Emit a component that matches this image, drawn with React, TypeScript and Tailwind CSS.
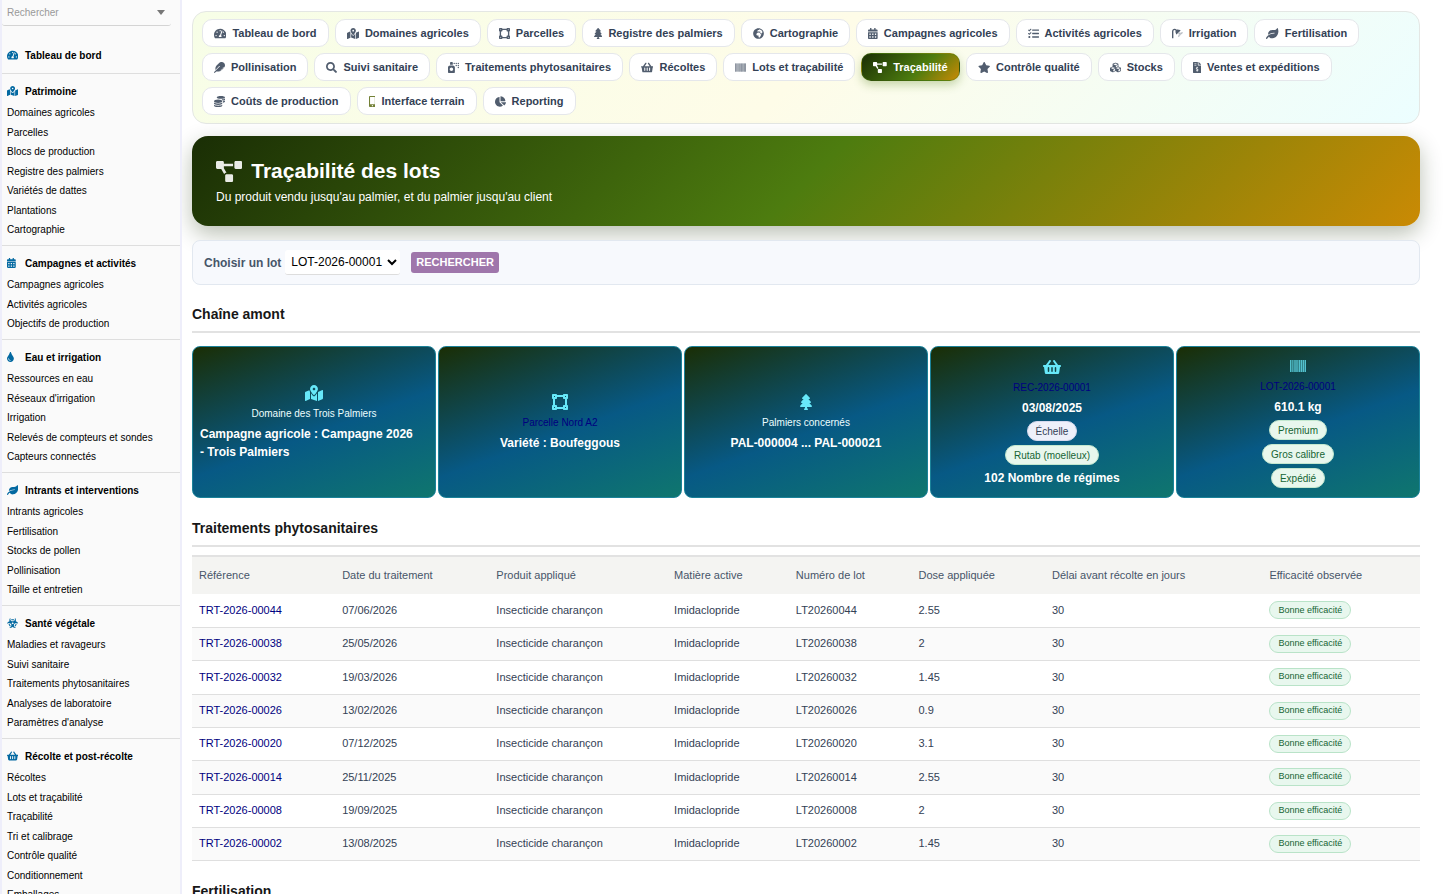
import type { ReactNode } from "react";
import type { IconType } from "react-icons";
import {
  FaBiohazard,
  FaCalendarAlt,
  FaChartPie,
  FaCoins,
  FaCubes,
  FaFeather,
  FaFileInvoiceDollar,
  FaGlobeAfrica,
  FaLeaf,
  FaMapMarkedAlt,
  FaMobileAlt,
  FaProjectDiagram,
  FaSearch,
  FaShoppingBasket,
  FaShower,
  FaSprayCan,
  FaStar,
  FaTachometerAlt,
  FaTasks,
  FaTint,
  FaTree,
  FaVectorSquare,
} from "react-icons/fa";

type Icon = IconType | ((props: { className?: string }) => ReactNode);

function BarcodeIcon({ className }: { className?: string }) {
  return (
    <svg viewBox="0 0 32 32" fill="currentColor" className={className} aria-hidden="true">
      <path d="M0 4h32v24H0z" opacity="0.4" />
      <path
        d="M0 4h2v24H0zM4 4h1v24H4zM8 4h1v24H8zM11 4h2v24h-2zM15 4h1v24h-1zM18 4h2v24h-2zM22 4h2v24h-2zM26 4h2v24h-2zM30 4h2v24h-2z"
        opacity="0.6"
      />
    </svg>
  );
}

// Width-to-height ratio of the glyphs that are not square.
const glyphAspect = new Map<Icon, string>([
  [FaTachometerAlt, "aspect-[9/8]"],
  [FaMapMarkedAlt, "aspect-[9/8]"],
  [FaLeaf, "aspect-[9/8]"],
  [FaShoppingBasket, "aspect-[9/8]"],
  [FaStar, "aspect-[9/8]"],
  [FaBiohazard, "aspect-[9/8]"],
  [FaProjectDiagram, "aspect-[5/4]"],
  [FaCalendarAlt, "aspect-[7/8]"],
  [FaTree, "aspect-[3/4]"],
  [FaFileInvoiceDollar, "aspect-[3/4]"],
  [FaTint, "aspect-[11/16]"],
  [FaMobileAlt, "aspect-[5/8]"],
]);

function Glyph({ of: Shape, className }: { of: Icon; className: string }) {
  return <Shape className={`w-auto shrink-0 ${glyphAspect.get(Shape) ?? "aspect-square"} ${className}`} />;
}

type MenuGroup = { title: string; icon: Icon; items: string[] };

const menu: MenuGroup[] = [
  {
    title: "Patrimoine",
    icon: FaMapMarkedAlt,
    items: [
      "Domaines agricoles",
      "Parcelles",
      "Blocs de production",
      "Registre des palmiers",
      "Variétés de dattes",
      "Plantations",
      "Cartographie",
    ],
  },
  {
    title: "Campagnes et activités",
    icon: FaCalendarAlt,
    items: ["Campagnes agricoles", "Activités agricoles", "Objectifs de production"],
  },
  {
    title: "Eau et irrigation",
    icon: FaTint,
    items: [
      "Ressources en eau",
      "Réseaux d'irrigation",
      "Irrigation",
      "Relevés de compteurs et sondes",
      "Capteurs connectés",
    ],
  },
  {
    title: "Intrants et interventions",
    icon: FaLeaf,
    items: ["Intrants agricoles", "Fertilisation", "Stocks de pollen", "Pollinisation", "Taille et entretien"],
  },
  {
    title: "Santé végétale",
    icon: FaBiohazard,
    items: [
      "Maladies et ravageurs",
      "Suivi sanitaire",
      "Traitements phytosanitaires",
      "Analyses de laboratoire",
      "Paramètres d'analyse",
    ],
  },
  {
    title: "Récolte et post-récolte",
    icon: FaShoppingBasket,
    items: [
      "Récoltes",
      "Lots et traçabilité",
      "Traçabilité",
      "Tri et calibrage",
      "Contrôle qualité",
      "Conditionnement",
      "Emballages",
    ],
  },
];

type NavEntry = { label: string; icon: Icon; active?: boolean; iconClass?: string };

const navEntries: NavEntry[] = [
  { label: "Tableau de bord", icon: FaTachometerAlt },
  { label: "Domaines agricoles", icon: FaMapMarkedAlt },
  { label: "Parcelles", icon: FaVectorSquare },
  { label: "Registre des palmiers", icon: FaTree },
  { label: "Cartographie", icon: FaGlobeAfrica },
  { label: "Campagnes agricoles", icon: FaCalendarAlt },
  { label: "Activités agricoles", icon: FaTasks },
  { label: "Irrigation", icon: FaShower },
  { label: "Fertilisation", icon: FaLeaf },
  { label: "Pollinisation", icon: FaFeather },
  { label: "Suivi sanitaire", icon: FaSearch },
  { label: "Traitements phytosanitaires", icon: FaSprayCan },
  { label: "Récoltes", icon: FaShoppingBasket },
  { label: "Lots et traçabilité", icon: BarcodeIcon },
  { label: "Traçabilité", icon: FaProjectDiagram, active: true },
  { label: "Contrôle qualité", icon: FaStar },
  { label: "Stocks", icon: FaCubes },
  { label: "Ventes et expéditions", icon: FaFileInvoiceDollar },
  { label: "Coûts de production", icon: FaCoins },
  { label: "Interface terrain", icon: FaMobileAlt, iconClass: "text-[#5b6b14]" },
  { label: "Reporting", icon: FaChartPie },
];

const columns = [
  "Référence",
  "Date du traitement",
  "Produit appliqué",
  "Matière active",
  "Numéro de lot",
  "Dose appliquée",
  "Délai avant récolte en jours",
  "Efficacité observée",
];

const treatments = [
  { id: "00044", date: "07/06/2026", dose: "2.55" },
  { id: "00038", date: "25/05/2026", dose: "2" },
  { id: "00032", date: "19/03/2026", dose: "1.45" },
  { id: "00026", date: "13/02/2026", dose: "0.9" },
  { id: "00020", date: "07/12/2025", dose: "3.1" },
  { id: "00014", date: "25/11/2025", dose: "2.55" },
  { id: "00008", date: "19/09/2025", dose: "2" },
  { id: "00002", date: "13/08/2025", dose: "1.45" },
];

function MenuTitle({ icon, children }: { icon: Icon; children: ReactNode }) {
  return (
    <h2 className="flex h-[18px] items-center pl-[5px] font-bold">
      <span className="flex w-[18px] items-center text-[#0369a1]">
        <Glyph of={icon} className="h-[10px]" />
      </span>
      {children}
    </h2>
  );
}

function Sidebar() {
  return (
    <aside className="w-[182px] shrink-0 overflow-hidden border-x-2 border-[#eeeefa] bg-[#fafafa] text-[10px] text-black">
      <div className="mr-[9px] flex h-[26px] items-center rounded-b-[3px] border-b border-[#d4d4d4] pl-[5px] pr-[6px]">
        <input
          aria-label="Rechercher"
          placeholder="Rechercher"
          className="min-w-0 flex-1 bg-transparent outline-none placeholder:text-[#999999]"
        />
        <button type="button" aria-label="Ouvrir la liste">
          <svg viewBox="0 0 8 5" className="h-[5px] w-2 fill-[#777777]">
            <path d="M0 0h8L4 5z" />
          </svg>
        </button>
      </div>
      <div className="pb-[9px] pt-5">
        <MenuTitle icon={FaTachometerAlt}>Tableau de bord</MenuTitle>
      </div>
      <nav aria-label="Menu principal">
        {menu.map((group) => (
          <section key={group.title} className="border-t border-[#dedede] pb-1.5 pt-2">
            <MenuTitle icon={group.icon}>{group.title}</MenuTitle>
            <ul className="mt-[3px]">
              {group.items.map((item) => (
                <li key={item} className="flex items-center pl-[5px] odd:h-[19px] even:h-5">
                  <a href="#">{item}</a>
                </li>
              ))}
            </ul>
          </section>
        ))}
      </nav>
    </aside>
  );
}

function TopNav() {
  return (
    <nav
      aria-label="Modules"
      className="flex flex-wrap gap-1.5 rounded-[14px] border border-[#e4e7e4] bg-[linear-gradient(135deg,#f7fee7,#fefce8_50%,#ecfeff)] px-[9px] pb-2 pt-[7px]"
    >
      {navEntries.map(({ label, icon, active, iconClass }) => (
        <a
          key={label}
          href="#"
          className={
            active
              ? "flex h-7 items-center gap-1.5 rounded-[10px] border border-[#4d7c0f]/40 bg-[linear-gradient(135deg,#1a2e05,#4d7c0f_60%,#ca8a04)] px-[11px] font-bold text-white shadow-[0_4px_10px_rgba(77,124,15,0.3)]"
              : "flex h-7 items-center gap-1.5 rounded-[10px] border border-[#e5e7eb] bg-white px-[11px] font-bold text-[#334155]"
          }
        >
          <Glyph of={icon} className={active ? "h-[11px]" : `h-[11px] opacity-85 ${iconClass ?? ""}`} />
          {label}
        </a>
      ))}
    </nav>
  );
}

function SectionTitle({ children }: { children: ReactNode }) {
  return (
    <h2 className="border-b-2 border-[#e2e2e2] pb-[7px] text-[14px] leading-5 font-bold text-[#171717]">{children}</h2>
  );
}

function ChainCard({ icon, children }: { icon: Icon; children: ReactNode }) {
  return (
    <article className="flex flex-col items-center justify-center gap-1 rounded-lg border border-[#1b8299] bg-[linear-gradient(160deg,#1a2e05,#075985_55%,#0f766e)] px-[7px] py-[9px] text-[10px] leading-[15px] text-[#ecfeff]">
      <span className="flex h-[19px] items-center text-[#67e8f9]">
        <Glyph of={icon} className="h-4" />
      </span>
      {children}
    </article>
  );
}

function Strong({ children }: { children: ReactNode }) {
  return <strong className="text-[12px] leading-[18px] font-bold text-white">{children}</strong>;
}

function CardBadge({ neutral, children }: { neutral?: boolean; children: ReactNode }) {
  return (
    <span
      className={
        neutral
          ? "flex h-5 items-center rounded-full border border-[#d5d9ee] bg-[#eef0fa] px-2 text-[#334155]"
          : "flex h-5 items-center rounded-full border border-[#c3e8cf] bg-[#e8f7ed] px-2 text-[#166534]"
      }
    >
      {children}
    </span>
  );
}

export default function App() {
  return (
    <div className="flex h-screen overflow-hidden bg-white font-['Liberation_Sans',Arial,sans-serif] text-[11px] text-[#334155]">
      <Sidebar />
      <main className="min-w-0 flex-1 overflow-hidden pl-2.5 pr-[25px] pt-[11px]">
        <TopNav />

        <header className="mt-3 rounded-2xl bg-[linear-gradient(135deg,#1a2e05,#4d7c0f_50%,#ca8a04)] px-6 py-5 text-white shadow-[0_8px_22px_rgba(26,46,5,0.3)]">
          <h1 className="flex items-center gap-[9px] text-[21px] leading-[30px] font-bold">
            <Glyph of={FaProjectDiagram} className="h-[21px] opacity-90" />
            Traçabilité des lots
          </h1>
          <p className="mt-0.5 text-[12px] leading-[18px]">Du produit vendu jusqu'au palmier, et du palmier jusqu'au client</p>
        </header>

        <form className="mt-[14px] flex h-[45px] items-center rounded-lg border border-[#e2e8f0] bg-[#f7f9fd] px-[11px]">
          <label htmlFor="lot" className="text-[12px] font-bold text-[#475569]">
            Choisir un lot
          </label>
          <select
            id="lot"
            className="ml-1 h-[25px] w-[115px] rounded-[3px] border-b border-[#dddddd] bg-white pl-0.5 text-[12px] text-black"
          >
            <option>LOT-2026-00001</option>
          </select>
          <button type="button" className="ml-[11px] h-[21px] rounded-[3px] bg-[#9f76ab] px-[5px] font-bold text-white">
            RECHERCHER
          </button>
        </form>

        <section className="mt-[19px]">
          <SectionTitle>Chaîne amont</SectionTitle>
          <div className="mt-[13px] grid grid-cols-5 gap-0.5">
            <ChainCard icon={FaMapMarkedAlt}>
              <span>Domaine des Trois Palmiers</span>
              <Strong>
                Campagne agricole : Campagne 2026 <span className="whitespace-nowrap">- Trois Palmiers</span>
              </Strong>
            </ChainCard>
            <ChainCard icon={FaVectorSquare}>
              <a href="#" className="text-[#000080]">
                Parcelle Nord A2
              </a>
              <Strong>Variété : Boufeggous</Strong>
            </ChainCard>
            <ChainCard icon={FaTree}>
              <span>Palmiers concernés</span>
              <Strong>PAL-000004 ... PAL-000021</Strong>
            </ChainCard>
            <ChainCard icon={FaShoppingBasket}>
              <a href="#" className="text-[#000080]">
                REC-2026-00001
              </a>
              <Strong>03/08/2025</Strong>
              <CardBadge neutral>Échelle</CardBadge>
              <CardBadge>Rutab (moelleux)</CardBadge>
              <Strong>102 Nombre de régimes</Strong>
            </ChainCard>
            <ChainCard icon={BarcodeIcon}>
              <a href="#" className="text-[#000080]">
                LOT-2026-00001
              </a>
              <Strong>610.1 kg</Strong>
              <CardBadge>Premium</CardBadge>
              <CardBadge>Gros calibre</CardBadge>
              <CardBadge>Expédié</CardBadge>
            </ChainCard>
          </div>
        </section>

        <section className="mt-5">
          <SectionTitle>Traitements phytosanitaires</SectionTitle>
          <table className="mt-2 w-full border-collapse text-left">
            <thead>
              <tr className="h-[38px] border-t-2 border-[#e2e2e2] bg-[#f4f4f2] text-[#475569]">
                {columns.map((column) => (
                  <th key={column} scope="col" className="px-[7px] font-normal">
                    {column}
                  </th>
                ))}
              </tr>
            </thead>
            <tbody>
              {treatments.map((row) => (
                <tr
                  key={row.id}
                  className="h-[33px] border-b border-[#dfdfdf] even:bg-[#fafafa] [&:nth-child(3n)]:h-[34px]"
                >
                  <td className="px-[7px]">
                    <a href="#" className="text-[#000080]">
                      TRT-2026-{row.id}
                    </a>
                  </td>
                  <td className="px-[7px]">{row.date}</td>
                  <td className="px-[7px]">Insecticide charançon</td>
                  <td className="px-[7px]">Imidaclopride</td>
                  <td className="px-[7px]">LT2026{row.id.slice(1)}</td>
                  <td className="px-[7px]">{row.dose}</td>
                  <td className="px-[7px]">30</td>
                  <td className="px-[7px]">
                    <span className="inline-flex h-[18px] items-center rounded-full border border-[#b9e3c8] bg-[#e8f7ee] px-2 align-middle text-[9px] text-[#166534]">
                      Bonne efficacité
                    </span>
                  </td>
                </tr>
              ))}
            </tbody>
          </table>
        </section>

        <section className="mt-5">
          <SectionTitle>Fertilisation</SectionTitle>
        </section>
      </main>
    </div>
  );
}
